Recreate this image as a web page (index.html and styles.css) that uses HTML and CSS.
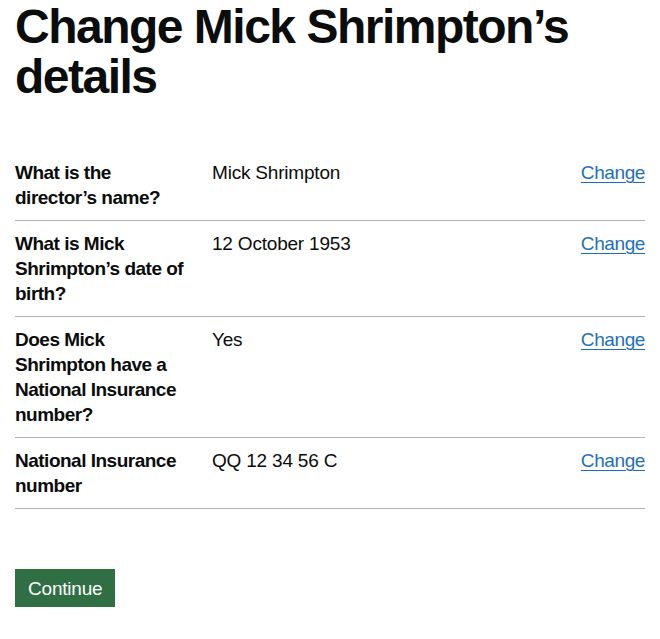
FILE: index.html
```html
<!DOCTYPE html>
<html lang="en">
<head>
<meta charset="utf-8">
<title>Change Mick Shrimpton’s details</title>
<link rel="stylesheet" href="styles.css">
</head>
<body>
<main class="page">
  <h1 class="heading">Change Mick Shrimpton’s details</h1>
  <dl class="summary">
    <div class="row">
      <dt class="key">What is the director’s name?</dt>
      <dd class="value">Mick Shrimpton</dd>
      <dd class="actions"><a class="link" href="#">Change</a></dd>
    </div>
    <div class="row">
      <dt class="key">What is Mick Shrimpton’s date of birth?</dt>
      <dd class="value">12 October 1953</dd>
      <dd class="actions"><a class="link" href="#">Change</a></dd>
    </div>
    <div class="row">
      <dt class="key">Does Mick Shrimpton have a National Insurance number?</dt>
      <dd class="value">Yes</dd>
      <dd class="actions"><a class="link" href="#">Change</a></dd>
    </div>
    <div class="row">
      <dt class="key">National Insurance number</dt>
      <dd class="value">QQ 12 34 56 C</dd>
      <dd class="actions"><a class="link" href="#">Change</a></dd>
    </div>
  </dl>
  <button class="button" type="button">Continue</button>
</main>
</body>
</html>
```
FILE: styles.css
```css
html, body {
  margin: 0;
  padding: 0;
  background: #ffffff;
}
body {
  font-family: "Liberation Sans", Arial, sans-serif;
  color: #0b0c0c;
}
.page {
  padding: 0 15px;
}
.heading {
  margin: 0 0 48px;
  padding-top: 2px;
  font-size: 48px;
  line-height: 50px;
  font-weight: 700;
  letter-spacing: -1.5px;
}
.summary {
  margin: 0 0 60px;
  padding: 0;
}
.row {
  display: grid;
  grid-template-columns: 197px 1fr auto;
  border-bottom: 1px solid #b1b4b6;
  padding: 10px 0;
  font-size: 19px;
  line-height: 25px;
}
.key {
  margin: 0;
  padding-right: 20px;
  font-weight: 700;
  letter-spacing: -0.5px;
}
.value {
  margin: 0;
  padding-right: 20px;
  letter-spacing: -0.2px;
}
.actions {
  margin: 0;
  text-align: right;
}
.link {
  color: #1d70b8;
  text-decoration: underline;
  text-underline-offset: 3px;
  text-decoration-thickness: 1px;
  letter-spacing: -0.4px;
}
.button {
  font-family: "Liberation Sans", Arial, sans-serif;
  font-size: 19px;
  line-height: 19px;
  color: #ffffff;
  background: #306f44;
  border: 2px solid transparent;
  border-radius: 0;
  box-shadow: 0 2px 0 #0f2a18;
  padding: 8px 11px 7px;
  margin: 0;
  cursor: pointer;
  letter-spacing: -0.2px;
}
```
